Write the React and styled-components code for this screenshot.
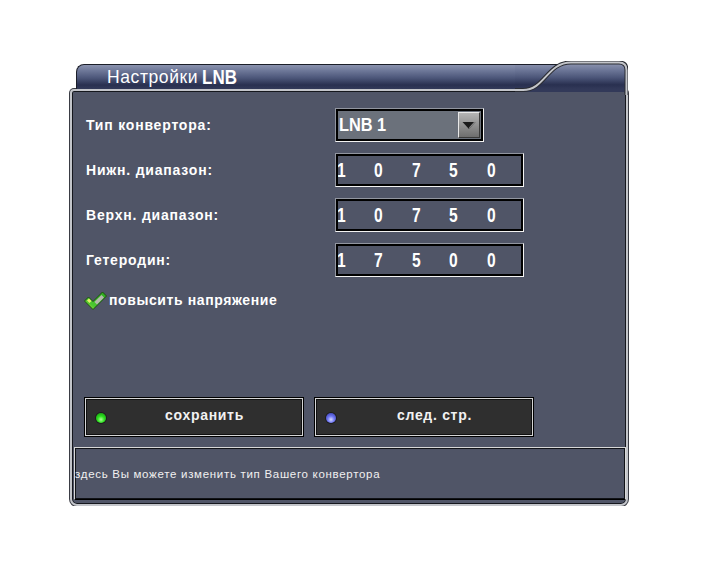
import React from "react";
import styled, { createGlobalStyle } from "styled-components";

const Global = createGlobalStyle`
  html, body { margin: 0; padding: 0; background: #ffffff; }
  body { font-family: "Liberation Sans", Arial, sans-serif; }
`;

const Window = styled.div`
  position: relative;
  width: 558px;
  margin: 61px 0 0 70px;
`;

const TitleBar = styled.div`
  height: 28px;
  display: flex;
  align-items: flex-end;
  padding: 0 8px 0 6px;
`;

const TitleTab = styled.div`
  flex: 1;
  height: 25px;
  box-sizing: border-box;
  border-top: 1px solid #1b1e29;
  border-left: 1px solid #1b1e29;
  border-top-left-radius: 8px;
  background: linear-gradient(
    to bottom,
    #8a92ae 0px,
    #6c7697 6px,
    #4c5679 13px,
    #293050 20px,
    #323959 24px
  );
  display: flex;
  align-items: center;
  gap: 4px;
  padding-left: 30px;
  color: #ffffff;
`;

const TitleText = styled.span`
  font-size: 17.5px;
  letter-spacing: 0.6px;
`;

const Narrow = styled.span`
  display: inline-block;
  font-weight: bold;
  font-size: ${(p) => p.$size}px;
  transform: scaleX(${(p) => p.$sx});
  transform-origin: left center;
  white-space: nowrap;
`;

const Curve = styled.svg`
  position: absolute;
  left: 445px;
  top: 0;
  width: 113px;
  height: 34px;
  pointer-events: none;
`;

const Panel = styled.div`
  height: 417px;
  box-sizing: border-box;
  border: 2px solid #c3c5ca;
  border-radius: 4px 4px 7px 7px;
  box-shadow: 0 0 0 1px #3a3c44, inset 0 0 0 1px #15171d;
  background: #505567;
  display: flex;
  flex-direction: column;
`;

const Form = styled.div`
  display: grid;
  grid-template-columns: 249px auto;
  grid-auto-rows: 34px;
  row-gap: 11px;
  padding: 17px 0 0 14px;
`;

const Label = styled.div`
  align-self: center;
  color: #ffffff;
  font-weight: bold;
  font-size: 14px;
  letter-spacing: 0.8px;
`;

const Bevel = styled.div`
  box-sizing: border-box;
  height: 34px;
  width: ${(p) => p.$w}px;
  border: 1px solid;
  border-color: #9296a0 #f2f2f2 #f2f2f2 #9296a0;
  display: flex;
  overflow: hidden;
`;

const BevelInner = styled.div`
  flex: 1;
  min-width: 0;
  display: flex;
  border: 2px solid #000000;
  background: ${(p) => p.$bg};
  overflow: hidden;
`;

const SelectValue = styled.div`
  flex: 1;
  display: flex;
  align-items: center;
  padding-left: 1px;
  color: #ffffff;
`;

const SelectButton = styled.div`
  width: 22px;
  margin: 1px 1px 1px 0;
  box-sizing: border-box;
  border: 1px solid;
  border-color: #e8e8e8 #3a3a3a #3a3a3a #e8e8e8;
  background: linear-gradient(to bottom, #b4b4b4, #6e6e6e);
  display: flex;
  align-items: center;
  justify-content: center;
`;

const Digits = styled.div`
  display: flex;
  align-items: center;
  margin-left: -1px;
`;

const DigitCell = styled.span`
  flex: none;
  width: 37.4px;
  color: #ffffff;
`;

const CheckRow = styled.div`
  display: flex;
  align-items: center;
  gap: 2px;
  margin: 13px 0 0 12px;
  color: #ffffff;
  font-weight: bold;
  font-size: 14px;
  letter-spacing: 0.6px;
`;

const Buttons = styled.div`
  display: flex;
  gap: 10px;
  margin: 87px 0 0 12px;
`;

const Button = styled.div`
  width: 220px;
  height: 40px;
  box-sizing: border-box;
  border: 1px solid #000000;
  box-shadow: inset 0 0 0 1px #d6d6d6, inset 0 0 0 2px #111111;
  background: #2f2f2f;
  display: flex;
  align-items: flex-start;
  padding: 9px 0 0 11px;
`;

const Dot = styled.span`
  width: 10px;
  height: 10px;
  margin-top: 6px;
  border-radius: 50%;
  flex: none;
  background: ${(p) =>
    p.$color === "green"
      ? "radial-gradient(circle at 50% 65%, #b0ff9a 0, #2ee020 40%, #0e8a0a 100%)"
      : "radial-gradient(circle at 50% 65%, #d8dcff 0, #7078f4 40%, #2c319e 100%)"};
  box-shadow: 0 0 0 1px rgba(0, 0, 0, 0.4);
`;

const ButtonLabel = styled.span`
  flex: 1;
  text-align: center;
  color: #f2f2f2;
  font-weight: bold;
  font-size: 14px;
  letter-spacing: 0.7px;
`;

const Status = styled.div`
  height: 53px;
  margin: 10px 0 0 2px;
  box-sizing: border-box;
  border: 1px solid;
  border-color: #d8d8d8 #d8d8d8 #000000 #d8d8d8;
  box-shadow: inset 0 0 0 1px #111318;
  display: flex;
  align-items: center;
  overflow: hidden;
`;

const StatusText = styled.span`
  white-space: nowrap;
  color: #f0f0f0;
  font-size: 11.5px;
  letter-spacing: 0.7px;
`;

function CheckIcon() {
  return (
    <svg width="23" height="20" viewBox="0 0 23 20">
      <defs>
        <linearGradient id="chk" x1="0" y1="1" x2="1" y2="0">
          <stop offset="0" stopColor="#d6e64a" />
          <stop offset="0.3" stopColor="#4cc830" />
          <stop offset="1" stopColor="#2aa81c" />
        </linearGradient>
      </defs>
      <polygon
        points="0.5,11 4.5,7 9,11.5 18.5,2 22.5,6 9,19.5"
        fill="url(#chk)"
        stroke="#1a4e10"
        strokeWidth="1"
        strokeLinejoin="round"
      />
      <polygon points="10.5,12 17.5,5 20,7.5 13,14.5" fill="#b4b8ac" />
      <polygon points="3,10.5 5,8.5 7.5,11 5.5,13" fill="#e6f06a" />
    </svg>
  );
}

function Arrow() {
  return (
    <svg width="14" height="9" viewBox="0 0 14 9">
      <polygon points="0.5,1 13.5,1 7,8" fill="#1a1a1a" />
      <polygon points="7,8 13.5,1 12,1 7,6.5" fill="#8a8a8a" />
    </svg>
  );
}

function NumberField({ value }) {
  return (
    <Bevel $w={189}>
      <BevelInner $bg="#505567">
        <Digits>
          {value.split("").map((d, i) => (
            <DigitCell key={i}>
              <Narrow $size={20} $sx={0.78}>{d}</Narrow>
            </DigitCell>
          ))}
        </Digits>
      </BevelInner>
    </Bevel>
  );
}

export default function App() {
  return (
    <>
      <Global />
      <Window>
        <TitleBar>
          <TitleTab>
            <TitleText>Настройки</TitleText>
            <Narrow $size={20} $sx={0.85}>LNB</Narrow>
          </TitleTab>
        </TitleBar>
        <Panel>
          <Form>
            <Label>Тип конвертора:</Label>
            <Bevel $w={149}>
              <BevelInner $bg="#6b717b">
                <SelectValue>
                  <Narrow $size={19} $sx={0.86}>LNB 1</Narrow>
                </SelectValue>
                <SelectButton>
                  <Arrow />
                </SelectButton>
              </BevelInner>
            </Bevel>
            <Label>Нижн. диапазон:</Label>
            <NumberField value="10750" />
            <Label>Верхн. диапазон:</Label>
            <NumberField value="10750" />
            <Label>Гетеродин:</Label>
            <NumberField value="17500" />
          </Form>
          <CheckRow>
            <CheckIcon />
            <span>повысить напряжение</span>
          </CheckRow>
          <Buttons>
            <Button>
              <Dot $color="green" />
              <ButtonLabel>сохранить</ButtonLabel>
            </Button>
            <Button>
              <Dot $color="blue" />
              <ButtonLabel>след. стр.</ButtonLabel>
            </Button>
          </Buttons>
          <Status>
            <StatusText>здесь Вы можете изменить тип Вашего конвертора</StatusText>
          </Status>
        </Panel>
        <Curve viewBox="0 0 113 34">
          <defs>
            <linearGradient id="hdr" gradientUnits="userSpaceOnUse" x1="0" y1="3" x2="0" y2="28">
              <stop offset="0" stopColor="#8a92ae" />
              <stop offset="0.25" stopColor="#6c7697" />
              <stop offset="0.54" stopColor="#4c5679" />
              <stop offset="0.83" stopColor="#293050" />
              <stop offset="1" stopColor="#323959" />
            </linearGradient>
          </defs>
          <path
            d="M0,4 L46,4 C50,2 52,1.5 56,1.5 L104,1.5 Q111.5,1.5 111.5,9 L111.5,31 L0,31 Z"
            fill="url(#hdr)"
          />
          <path
            d="M0,29 L8,29 C30,29 32,1.5 56,1.5 L104,1.5 Q111.5,1.5 111.5,9 L111.5,34"
            fill="none"
            stroke="#2a2c33"
            strokeWidth="4"
          />
          <path
            d="M0,29 L8,29 C30,29 32,1.5 56,1.5 L104,1.5 Q111.5,1.5 111.5,9 L111.5,34"
            fill="none"
            stroke="#c3c5ca"
            strokeWidth="2"
          />
        </Curve>
      </Window>
    </>
  );
}
